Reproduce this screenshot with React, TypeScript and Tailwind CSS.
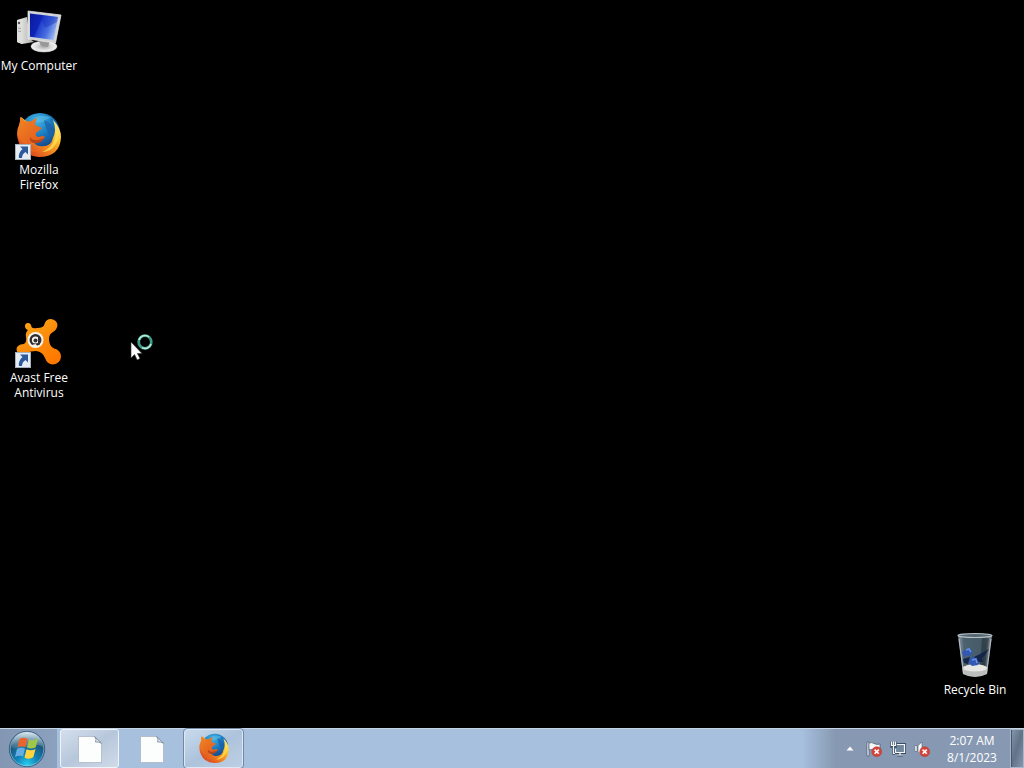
import React, { useId } from "react";

function ComputerIcon() {
  return (
    <svg viewBox="0 0 48 48" className="size-12" aria-hidden="true">
      <defs>
        <linearGradient id="pc-screen" x1="0" y1="0.2" x2="1" y2="0.6">
          <stop offset="0" stopColor="#0a1c9e" />
          <stop offset="0.34" stopColor="#0f25b8" />
          <stop offset="0.4" stopColor="#2444cf" />
          <stop offset="0.7" stopColor="#4a70e0" />
          <stop offset="1" stopColor="#a4c0f4" />
        </linearGradient>
        <linearGradient id="pc-tower" x1="0" y1="0" x2="1" y2="0">
          <stop offset="0" stopColor="#f2f2f0" />
          <stop offset="1" stopColor="#a9a9a8" />
        </linearGradient>
        <radialGradient id="pc-base">
          <stop offset="0" stopColor="#a8a8a8" />
          <stop offset="0.6" stopColor="#dededd" />
          <stop offset="1" stopColor="#f4f4f4" />
        </radialGradient>
      </defs>
      <path d="M2 12 L12 9 L15 31 L19 34 L7 36 L2 34Z" fill="url(#pc-tower)" />
      <path d="M2 12 L6 13 L7 36 L2 34Z" fill="#dededc" />
      <circle cx="4" cy="15" r="1.2" fill="#555" />
      <path d="M3 20 L6 20.5 M3 23 L6 23.5" stroke="#888" strokeWidth="0.7" />
      <ellipse cx="29" cy="38.5" rx="13" ry="5.5" fill="url(#pc-base)" stroke="#c9c9c9" strokeWidth="0.5" />
      <path d="M23 31 L35 33 L33 39 L26 38Z" fill="#999" />
      <path d="M13 3 L46 7 L40.5 35 L13 31Z" fill="#d0d3d6" stroke="#f0f0f0" strokeWidth="0.7" />
      <path d="M15 5.5 L43 9 L38.5 32 L15 28.7Z" fill="url(#pc-screen)" />
      <path d="M24 6.6 L43 9 L42 14 L30 20Z" fill="#0f25b8" opacity="0.35" />
    </svg>
  );
}

function FirefoxIcon({ className }: { className: string }) {
  const id = useId().replace(/[^a-zA-Z0-9]/g, "");
  return (
    <svg viewBox="0 0 48 48" className={className} aria-hidden="true">
      <defs>
        <radialGradient id={id + "globe"} cx="0.42" cy="0.2" r="0.75">
          <stop offset="0" stopColor="#43b4e4" />
          <stop offset="0.5" stopColor="#1979bd" />
          <stop offset="1" stopColor="#153b7c" />
        </radialGradient>
        <linearGradient id={id + "tail"} x1="0.9" y1="0.1" x2="0.2" y2="0.9">
          <stop offset="0" stopColor="#fff29c" />
          <stop offset="0.28" stopColor="#fccc35" />
          <stop offset="0.53" stopColor="#f4941f" />
          <stop offset="1" stopColor="#dc4620" />
        </linearGradient>
        <linearGradient id={id + "head"} x1="0" y1="0" x2="1" y2="1">
          <stop offset="0" stopColor="#f38424" />
          <stop offset="1" stopColor="#dd561c" />
        </linearGradient>
      </defs>
      <circle cx="25" cy="21" r="20" fill={`url(#${id}globe)`} />
      <path d="M21 5 Q29 2 36 6 Q31 7 28 10 Q22 11 17 9Z" fill="#60c0e5" opacity="0.55" />
      <path d="M29 8 Q37 11 40 20 Q36 17 35 24 Q31 18 29 8Z" fill="#1b5ca7" opacity="0.65" />
      <path d="M38 8 Q46 16 46 25 Q45 45 24 45 Q9 44 4 31 Q0 21 4 13 Q5 9 6 5 Q13 10 15 13 Q12 19 16 23 Q17 32 24 34 Q36 36 38 26 Q42 18 38 8Z" fill={`url(#${id}tail)`} />
      <path d="M5 5 Q8 7 10 9.5 Q13 9 16 9.5 Q19 6.5 22 6 Q20 10 20 13 Q24 15 27 16 Q25 18 21 21 Q20 25 24 25 Q28 23 30 25 Q28 28 23 29 Q15 29 15 33 Q6 32 3.5 24 Q2 18 5 13Z" fill={`url(#${id}head)`} />
      <path d="M15 25 Q19 31 29 26 Q27 32 19 31 Q14 30 15 25Z" fill="#b9431a" />
      <path d="M40 11 Q47 23 41 32 Q36 40 27 40 Q36 36 39 29 Q42 21 40 11Z" fill="#ffdd54" opacity="0.8" />
      <path d="M5 28 Q12 40 28 38 Q18 42 10 36Z" fill="#f46b22" opacity="0.7" />
    </svg>
  );
}

function AvastIcon() {
  return (
    <svg viewBox="0 0 48 48" className="size-12 overflow-visible" aria-hidden="true">
      <defs>
        <linearGradient id="avast-body" x1="0" y1="0" x2="0.7" y2="1">
          <stop offset="0" stopColor="#ffad16" />
          <stop offset="0.55" stopColor="#fb8c0b" />
          <stop offset="1" stopColor="#ff7900" />
        </linearGradient>
      </defs>
      <path d="M10 6 Q10 3 13 3 Q16 3 16.5 7 Q18 9 22 8 Q29 8 29.5 4 Q31 -1 36 -1 Q42 0 42.5 5 Q42 10 38 12 Q34 14 34 19 Q34 26 39 28.5 Q46 30 46 37 Q45 44 38 44.5 Q32 44 30 38 Q28 32 21 31 Q15 31 12 33 Q7 36 3 33 Q0 29 3 26 Q5 24 9 24 Q12 22 11 17 Q10 13 13 10 Q10 9 10 6Z" fill="url(#avast-body)" />
      <circle cx="20.5" cy="20" r="8" fill="#faf6eb" />
      <circle cx="20.5" cy="20" r="4.8" fill="none" stroke="#302f35" strokeWidth="2.4" />
      <circle cx="20.5" cy="20.5" r="2" fill="#302f35" />
      <path d="M24 17 V24.5" fill="none" stroke="#302f35" strokeWidth="2" />
      <path d="M17 25 Q20 28 23 26.5 L20.5 24Z" fill="#faf6eb" />
    </svg>
  );
}

function RecycleBinIcon() {
  return (
    <svg viewBox="0 0 48 48" className="size-12" aria-hidden="true">
      <defs>
        <linearGradient id="bin-glass" x1="0" y1="0" x2="1" y2="0">
          <stop offset="0" stopColor="#8a98a5" />
          <stop offset="0.2" stopColor="#4d606e" />
          <stop offset="0.75" stopColor="#394852" />
          <stop offset="1" stopColor="#8b949c" />
        </linearGradient>
      </defs>
      <path d="M7 3 L41 3 L36 42 Q24 48 12 42Z" fill="url(#bin-glass)" />
      <path d="M11 5 L35 5 L31 33 L15 33Z" fill="#4c626f" opacity="0.7" />
      <path d="M31 6 L38 6 L34 35 L29 35Z" fill="#1b2a34" opacity="0.5" />
      <path d="M11.5 35 Q24 29 36.5 35 L36 42 Q24 48 12 42Z" fill="#bcbebc" />
      <ellipse cx="24" cy="36" rx="12" ry="3.6" fill="#e6e6e3" />
      <path d="M14 18 L19 16 L22 20 L19 24 L15 23 L13 26 L11 20Z M19 26 L24 24 L28 28 L27 33 L21 34 L18 31Z" fill="#3058b4" />
      <path d="M12 27 L19 25 L17 32 L13 31Z M23 25 L31 21 L38 17 L34 23 L31 26 L32 30 L28 30Z" fill="#14254c" />
      <path d="M15 18 L18 17 L20 20 M21 28 L25 27 L26 31" fill="none" stroke="#6c8fe0" strokeWidth="1.5" />
      <path d="M8 7 L12.5 41 M40 7 L35.5 41" stroke="#cbd2d7" strokeWidth="1.2" opacity="0.7" />
      <ellipse cx="24" cy="3.5" rx="17" ry="2" fill="#566771" stroke="#b5c0c6" strokeWidth="1.2" />
    </svg>
  );
}

function ShortcutArrow() {
  return (
    <svg viewBox="0 0 16 16" className="absolute bottom-0 left-0 size-4" aria-hidden="true">
      <rect x="0.5" y="0.5" width="15" height="15" fill="#e6ecf3" stroke="#a7b2bd" />
      <path d="M5 2.5 L13 2.5 L13 10.5 L10.5 8 Q7 10 7 14 L4 14 Q3 9 7.5 5Z" fill="#2d599d" />
    </svg>
  );
}

function DesktopItem({ label, icon, shortcut }: { label: string; icon: React.ReactNode; shortcut?: boolean }) {
  return (
    <button type="button" className="flex h-[104px] w-[78px] flex-col items-center gap-0.5 text-xs leading-[15px] text-white">
      <span className="relative block size-12 shrink-0">
        {icon}
        {shortcut && <ShortcutArrow />}
      </span>
      <span className="w-full">{label}</span>
    </button>
  );
}

function FileIcon() {
  return (
    <svg viewBox="0 0 32 32" className="size-8" aria-hidden="true">
      <path d="M4.5 3.5 H20.5 L27.5 10 V29.5 H4.5Z" fill="#fcfdfd" stroke="#a6b0ba" strokeWidth="0.7" />
      <path d="M20.5 3.5 Q23 6 21.5 9 Q24 8.5 27.5 10.2Z" fill="#dce7ef" stroke="#758696" strokeWidth="0.8" />
    </svg>
  );
}

function StartOrb() {
  return (
    <svg viewBox="0 0 40 40" className="size-10" aria-hidden="true">
      <defs>
        <radialGradient id="orb-blue" cx="0.5" cy="0.95" r="0.9">
          <stop offset="0" stopColor="#2ad0ed" />
          <stop offset="0.35" stopColor="#0f83b8" />
          <stop offset="0.75" stopColor="#1d5478" />
          <stop offset="1" stopColor="#6d93aa" />
        </radialGradient>
        <linearGradient id="orb-shine" x1="0" y1="0" x2="0" y2="1">
          <stop offset="0" stopColor="#e4f1f6" stopOpacity="0.9" />
          <stop offset="1" stopColor="#85a8ba" stopOpacity="0.2" />
        </linearGradient>
      </defs>
      <circle cx="20" cy="20" r="17.7" fill="url(#orb-blue)" stroke="#304f70" strokeWidth="0.8" />
      <circle cx="20" cy="20" r="16.8" fill="none" stroke="#a8d3e5" strokeWidth="0.7" opacity="0.8" />
      <path d="M4 18 Q6 4 20 3 Q34 4 36 18 Q28 13 19 18 Q11 22 4 18Z" fill="url(#orb-shine)" />
      <path d="M12.5 10 Q16 7.5 20.5 9.8 L18.5 18 Q14 16.3 10.5 18.3Z" fill="#ed6429" />
      <path d="M22 10.5 Q26 12.2 31 9.5 L28.8 18.2 Q24 20.8 20 18.5Z" fill="#a0c74a" />
      <path d="M10 20 Q14 17.8 18 19.5 L16 27.5 Q12 25.9 8 28Z" fill="#65aee4" />
      <path d="M19.5 20.2 Q24 22.3 28.5 19.9 L26.3 28.3 Q22 31 17.5 28.5Z" fill="#ffd43c" />
    </svg>
  );
}

function ErrorBadge() {
  return (
    <>
      <circle cx="10.7" cy="10.7" r="4.9" fill="#d94439" stroke="#b23a3a" strokeWidth="0.6" />
      <path d="M8.6 8.6 L12.8 12.8 M12.8 8.6 L8.6 12.8" stroke="white" strokeWidth="1.6" />
    </>
  );
}

function FlagIcon() {
  return (
    <svg viewBox="0 0 16 16" className="size-4" aria-hidden="true">
      <path d="M1 1 H3 V15 H1Z" fill="#f5f7fa" stroke="#425467" strokeWidth="0.7" />
      <path d="M3 2 Q6 1 8 2.5 Q11 4 14 3 V9 Q10 10.5 7.5 8.8 Q5.5 8 3 9Z" fill="#f5f7fa" stroke="#425467" strokeWidth="0.7" />
      <ErrorBadge />
    </svg>
  );
}

function NetworkIcon() {
  return (
    <svg viewBox="0 0 16 16" className="size-4" aria-hidden="true">
      <path d="M6.5 3.5 H14.5 V11.5 H5.5 V8 M7 14 H13" fill="none" stroke="#384d60" strokeWidth="2.8" />
      <path d="M6 8 V4 H14 V11 H6Z" fill="#71879b" />
      <path d="M6.5 3.5 H14.5 V11.5 H5.5 V8 M7 14 H13 M10 12 V14" fill="none" stroke="#f3f7f9" strokeWidth="1.2" />
      <path d="M1.5 0.5 V5.5 H5.5 V0.5 M3.5 5 V12.5 H5" fill="none" stroke="#384d60" strokeWidth="2.4" />
      <path d="M1.5 0.5 V4.5 H5.5 V0.5 M3.5 0.5 V12.5 H5" fill="none" stroke="#f3f7f9" strokeWidth="1.2" />
    </svg>
  );
}

function VolumeIcon() {
  return (
    <svg viewBox="0 0 16 16" className="size-4" aria-hidden="true">
      <path d="M0.8 4.5 H3 V10.5 H0.8Z M4 4.5 L8 1 V14.5 L4 10.5Z" fill="#f7f9fb" stroke="#506378" strokeWidth="0.6" />
      <ErrorBadge />
    </svg>
  );
}

function BusyPointer() {
  return (
    <svg viewBox="0 0 26 30" className="pointer-events-none absolute top-[332px] left-[129px] h-[30px] w-[26px]" aria-hidden="true">
      <path d="M2 10 V26 L5.6 22.6 L8.2 28 L11 26.5 L8.4 21.5 H13Z" fill="white" stroke="#333" strokeWidth="0.6" />
      <circle cx="16" cy="10" r="6.3" fill="none" stroke="#3f9c87" strokeWidth="2.8" />
      <path d="M10 8 A6.3 6.3 0 0 1 20 5 M22 12 A6.3 6.3 0 0 1 13 15.6" fill="none" stroke="#b4ecdf" strokeWidth="1.6" />
    </svg>
  );
}

const taskButton = "flex h-[39px] w-[59px] items-center justify-center rounded-[3px] border";

export default function App() {
  return (
    <div className="relative flex min-h-screen flex-col overflow-hidden bg-black font-['Open_Sans','Noto_Sans',sans-serif]">
      <main className="flex flex-1 justify-between pt-2 pr-2.5">
        <div className="flex flex-col">
          <DesktopItem label="My Computer" icon={<ComputerIcon />} />
          <DesktopItem label="Mozilla Firefox" icon={<FirefoxIcon className="size-12" />} shortcut />
          <div className="h-[104px]" />
          <DesktopItem label="Avast Free Antivirus" icon={<AvastIcon />} shortcut />
        </div>
        <div className="-mb-2 self-end">
          <DesktopItem label="Recycle Bin" icon={<RecycleBinIcon />} />
        </div>
      </main>

      <footer className="relative flex h-10 justify-between border-t border-[#c5d4e5] bg-[#a6c0de]">
        <nav className="flex gap-[3px]" aria-label="Taskbar">
          <button type="button" aria-label="Start" className="flex w-[57px] items-center justify-center bg-linear-to-r from-[#8397b3] to-[#8ba1be] pr-[3px]">
            <StartOrb />
          </button>
          <button type="button" aria-label="Document" className={`${taskButton} border-[#eef4fa] bg-linear-to-br from-[#d4dfed] via-[#b7c7db] to-[#d0dbe9]`}>
            <FileIcon />
          </button>
          <button type="button" aria-label="Document" className={`${taskButton} border-transparent`}>
            <FileIcon />
          </button>
          <button type="button" aria-label="Mozilla Firefox" className={`${taskButton} border-[#dce8f4] bg-linear-to-br from-[#c9daed] via-[#adc3dc] to-[#bdcfe3] outline outline-[#7189a7]`}>
            <FirefoxIcon className="size-8" />
          </button>
        </nav>
        <div className="flex items-center bg-linear-to-r from-[#a6c0de] via-[#8799b2] via-15% to-[#8799b2] pl-10 text-xs text-white">
          <button type="button" aria-label="Show hidden icons" className="mr-2 flex size-4 items-center justify-center">
            <svg viewBox="0 0 8 5" className="h-[5px] w-2" aria-hidden="true">
              <path d="M0 4.8 L4 0.3 L8 4.8Z" fill="#fff" stroke="#58697f" strokeWidth="0.3" />
            </svg>
          </button>
          <div className="flex gap-2">
            <button type="button" aria-label="Action Center"><FlagIcon /></button>
            <button type="button" aria-label="Network"><NetworkIcon /></button>
            <button type="button" aria-label="Volume"><VolumeIcon /></button>
          </div>
          <button type="button" className="flex w-20 flex-col items-center pl-1 leading-[17px]">
            <span>2:07 AM</span>
            <span>8/1/2023</span>
          </button>
          <button type="button" aria-label="Show desktop" className="h-full w-3.5 border border-[#a8b7c8] bg-linear-to-br from-[#8497ac] via-[#607387] to-[#8498ae] shadow-[inset_1px_0_#45566a]" />
        </div>
      </footer>
      <BusyPointer />
    </div>
  );
}
